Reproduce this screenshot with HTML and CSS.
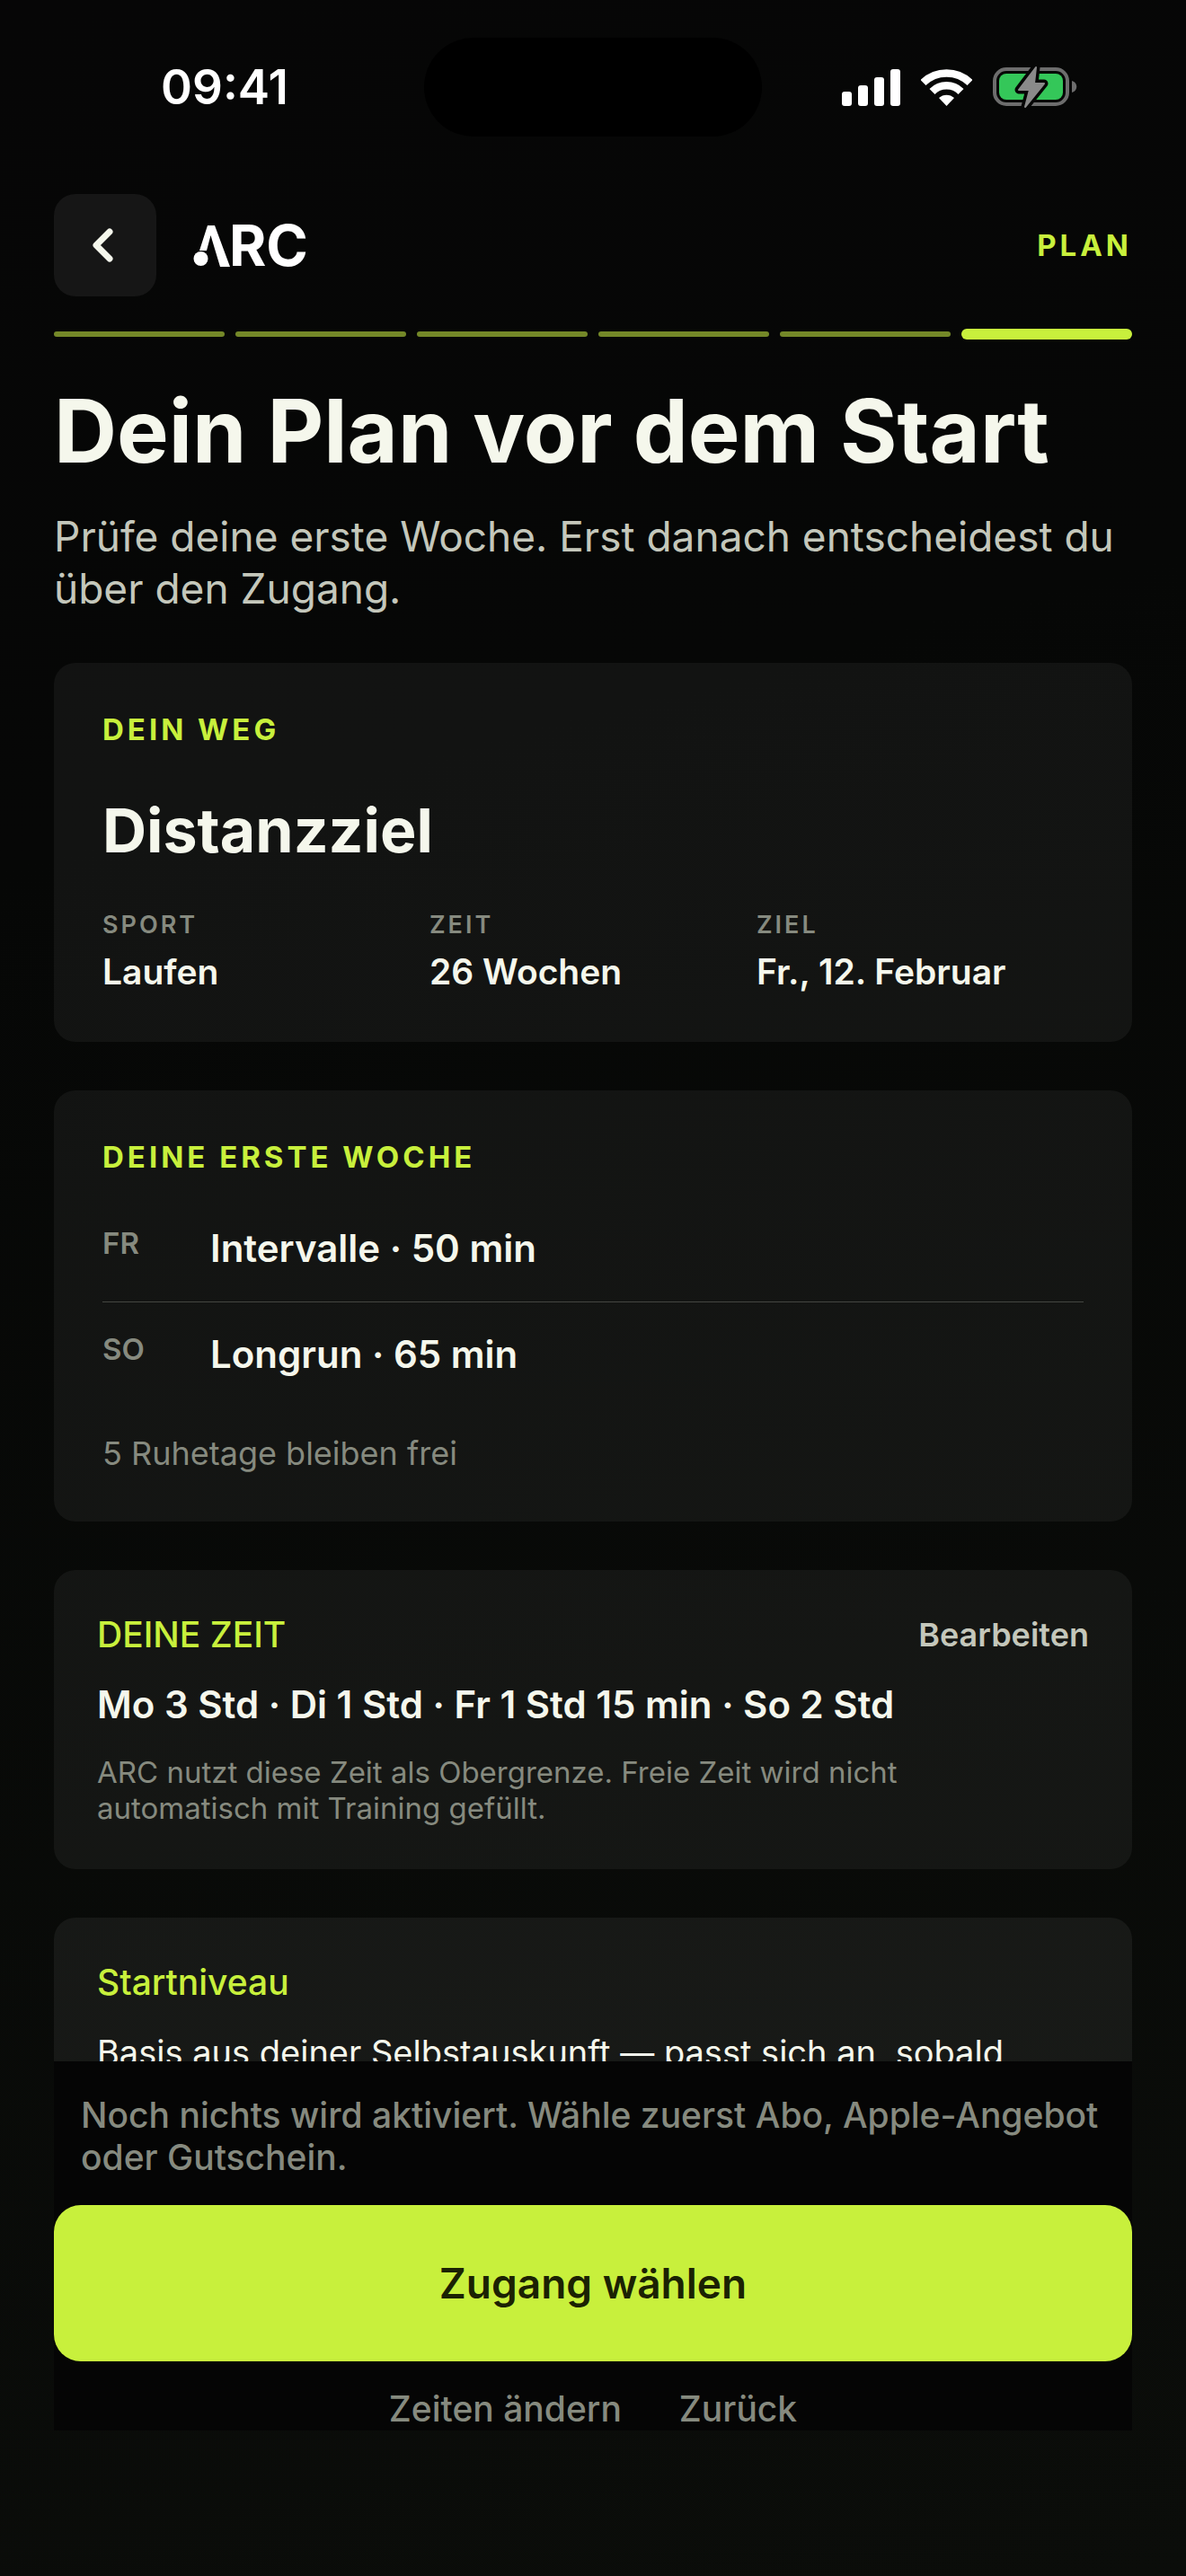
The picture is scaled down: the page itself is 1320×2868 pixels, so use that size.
FILE: index.html
```html
<!DOCTYPE html>
<html lang="de">
<head>
    <meta charset="UTF-8">
    <meta name="viewport" content="width=device-width, initial-scale=1.0">
    <title>ARC – Dein Plan</title>
    <link rel="stylesheet" href="styles.css">
</head>
<body>
    <div class="status-bar">
        <span class="time">09:41</span>
        <span class="island"></span>
        <div class="status-icons">
            <svg width="65" height="41" viewBox="0 0 65 41" fill="#fff" aria-hidden="true">
                <rect x="0" y="25" width="11" height="16" rx="3"/>
                <rect x="18" y="18" width="11" height="23" rx="3"/>
                <rect x="36" y="9" width="11" height="32" rx="3"/>
                <rect x="54" y="0" width="11" height="41" rx="3"/>
            </svg>
            <svg width="57" height="42" viewBox="0 0 57 42" aria-hidden="true">
                <path d="M2.5 16a37.5 37.5 0 0 1 52 0" fill="none" stroke="#fff" stroke-width="8.5"/>
                <path d="M12.5 26a22.6 22.6 0 0 1 32 0" fill="none" stroke="#fff" stroke-width="8.5"/>
                <path d="M28.5 42l-8.5-9a12.5 12.5 0 0 1 17 0z" fill="#fff"/>
            </svg>
            <svg width="94" height="46" viewBox="0 0 94 46" aria-hidden="true">
                <rect x="2" y="3" width="81" height="39" rx="13" fill="none" stroke="#6d6d6d" stroke-width="4"/>
                <rect x="7" y="8" width="71" height="29" rx="8" fill="#34c759"/>
                <path d="M48 1L29 26h12l-5 19 21-26H46z" fill="#060606" stroke="#060606" stroke-width="9" stroke-linejoin="round"/>
                <path d="M48 1L29 26h12l-5 19 21-26H46z" fill="#8a8a8a" stroke="#8a8a8a" stroke-width="2" stroke-linejoin="round"/>
                <path d="M88 16c7 2 7 11 0 13z" fill="#6d6d6d"/>
            </svg>
        </div>
    </div>

    <main class="screen">
        <header class="top">
            <button class="back" type="button" aria-label="Zurück">
                <svg width="28" height="38" viewBox="0 0 28 38" aria-hidden="true">
                    <path d="M19 4L4 19l15 15" fill="none" stroke="#f5f7ec" stroke-width="7" stroke-linecap="round" stroke-linejoin="round"/>
                </svg>
            </button>
            <div class="logo">
                <svg width="40" height="47" viewBox="0 0 40 47" fill="#fff" aria-hidden="true">
                    <path d="M16 1h8l17 46H30L19.5 12 15 29H7z"/>
                    <circle cx="8.5" cy="38" r="8"/>
                </svg>
                <span>RC</span>
            </div>
            <span class="eyebrow step">Plan</span>
        </header>

        <div class="progress">
            <span></span>
            <span></span>
            <span></span>
            <span></span>
            <span></span>
            <span class="active"></span>
        </div>

        <h1>Dein Plan vor dem Start</h1>
        <p class="intro">Prüfe deine erste Woche. Erst danach entscheidest du über den Zugang.</p>

        <section class="card">
            <h2 class="eyebrow">Dein Weg</h2>
            <p class="goal">Distanzziel</p>
            <dl class="facts">
                <div>
                    <dt>Sport</dt>
                    <dd>Laufen</dd>
                </div>
                <div>
                    <dt>Zeit</dt>
                    <dd>26 Wochen</dd>
                </div>
                <div>
                    <dt>Ziel</dt>
                    <dd>Fr., 12. Februar</dd>
                </div>
            </dl>
        </section>

        <section class="card">
            <h2 class="eyebrow">Deine erste Woche</h2>
            <ul class="week">
                <li><span class="day">FR</span><span class="session">Intervalle · 50 min</span></li>
                <li><span class="day">SO</span><span class="session">Longrun · 65 min</span></li>
            </ul>
            <p class="rest">5 Ruhetage bleiben frei</p>
        </section>

        <section class="card compact">
            <div class="card-head">
                <h2 class="label">DEINE ZEIT</h2>
                <button class="edit" type="button">Bearbeiten</button>
            </div>
            <p class="session">Mo 3 Std · Di 1 Std · Fr 1 Std 15 min · So 2 Std</p>
            <p class="hint">ARC nutzt diese Zeit als Obergrenze. Freie Zeit wird nicht automatisch mit Training gefüllt.</p>
        </section>

        <section class="card compact level">
            <h2 class="label">Startniveau</h2>
            <p class="basis">Basis aus deiner Selbstauskunft — passt sich an, sobald</p>
        </section>
    </main>

    <footer class="actions">
        <p class="note">Noch nichts wird aktiviert. Wähle zuerst Abo, Apple-Angebot oder Gutschein.</p>
        <button class="primary" type="button">Zugang wählen</button>
        <nav class="links">
            <a href="#">Zeiten ändern</a>
            <a href="#">Zurück</a>
        </nav>
    </footer>
</body>
</html>
```
FILE: styles.css
```css
* {
    box-sizing: border-box;
}
body {
    margin: 0;
    height: 100vh;
    display: flex;
    flex-direction: column;
    overflow: hidden;
    font-family: Inter, "Liberation Sans", sans-serif;
    color: #f5f7ec;
    background: linear-gradient(165deg, #060606 0%, #060706 30%, #0b0d0a 100%);
}
h1, h2, p, ul, dl, dd {
    margin: 0;
    padding: 0;
}
button {
    font: inherit;
    border: none;
    padding: 0;
    cursor: pointer;
}

/* status bar */
.status-bar {
    display: grid;
    grid-template-columns: 1fr 376px 1fr;
    align-items: center;
    height: 110px;
    margin-top: 42px;
    flex: none;
}
.time {
    color: #fff;
    font-size: 53px;
    font-weight: 600;
    text-align: center;
    padding-left: 28px;
}
.island {
    height: 110px;
    border-radius: 55px;
    background: #000;
}
.status-icons {
    display: flex;
    align-items: center;
    gap: 23px;
    padding-left: 89px;
}

/* content */
.screen {
    flex: 1;
    min-height: 0;
    overflow: hidden;
    padding: 64px 60px 0;
}
.top {
    display: flex;
    align-items: center;
    height: 114px;
}
.back {
    display: flex;
    align-items: center;
    justify-content: center;
    width: 114px;
    height: 114px;
    border-radius: 24px;
    background: #161616;
}
.logo {
    display: flex;
    align-items: center;
    margin-left: 41px;
    color: #fff;
    font-size: 63px;
    font-weight: 700;
}
.logo svg {
    overflow: visible;
}
.eyebrow {
    color: #c8f03c;
    font-size: 33px;
    line-height: 40px;
    font-weight: 700;
    letter-spacing: 4px;
    text-transform: uppercase;
}
.step {
    margin-left: auto;
}
.progress {
    display: grid;
    grid-template-columns: repeat(6, 1fr);
    gap: 12px;
    align-items: center;
    height: 12px;
    margin: 36px 0 48px;
}
.progress span {
    height: 6px;
    border-radius: 3px;
    background: #748828;
}
.progress .active {
    height: 12px;
    border-radius: 6px;
    background: #c8f03c;
}
h1 {
    font-size: 97px;
    line-height: 108px;
    font-weight: 700;
}
.intro {
    margin: 34px 0 54px;
    color: #c4c7bb;
    font-size: 46px;
    line-height: 58px;
}

/* cards */
.card {
    margin-bottom: 54px;
    padding: 54px;
    border-radius: 24px;
    background: rgba(255, 255, 255, 0.05);
}
.goal {
    margin-top: 50px;
    font-size: 68px;
    line-height: 84px;
    font-weight: 700;
}
.facts {
    display: grid;
    grid-template-columns: repeat(3, 1fr);
    margin-top: 48px;
}
.facts dt {
    color: #868a7f;
    font-size: 27px;
    line-height: 32px;
    font-weight: 600;
    letter-spacing: 3px;
    text-transform: uppercase;
}
.facts dd {
    margin-top: 12px;
    font-size: 39px;
    line-height: 48px;
    font-weight: 600;
}
.week {
    margin-top: 24px;
    list-style: none;
}
.week li {
    display: flex;
    padding: 32px 0 33px;
}
.week li + li {
    border-top: 1px solid #444641;
}
.day {
    width: 120px;
    color: #868a7f;
    font-size: 33px;
    line-height: 40px;
    font-weight: 600;
}
.session {
    font-size: 42px;
    line-height: 52px;
    font-weight: 600;
}
.rest {
    margin-top: 29px;
    color: #868a7f;
    font-size: 36px;
    line-height: 44px;
}
.compact {
    padding: 48px;
}
.card-head {
    display: flex;
    justify-content: space-between;
    align-items: center;
}
.label {
    color: #c8f03c;
    font-size: 39px;
    line-height: 48px;
    font-weight: 500;
}
.edit {
    background: none;
    color: #c4c7bb;
    font-size: 36px;
    line-height: 44px;
    font-weight: 600;
}
.compact .session {
    margin-top: 28px;
}
.hint {
    max-width: 960px;
    margin-top: 29px;
    color: #868a7f;
    font-size: 33px;
    line-height: 40px;
}
.level {
    background: rgba(255, 255, 255, 0.06);
}
.basis {
    margin-top: 28px;
    font-size: 38px;
    line-height: 52px;
    white-space: nowrap;
}

/* bottom actions */
.actions {
    flex: none;
    margin: 0 60px 162px;
    padding-top: 36px;
    background: #050505;
}
.note {
    padding: 0 30px;
    color: #868a7f;
    font-size: 39px;
    line-height: 47px;
    font-weight: 500;
}
.primary {
    display: block;
    width: 100%;
    height: 174px;
    margin: 30px 0 28px;
    border-radius: 30px;
    background: #c8f03c;
    color: #1b2203;
    font-size: 46px;
    font-weight: 600;
}
.links {
    display: flex;
    justify-content: center;
    gap: 64px;
}
.links a {
    color: #868a7f;
    font-size: 39px;
    line-height: 49px;
    font-weight: 500;
    text-decoration: none;
}
```
